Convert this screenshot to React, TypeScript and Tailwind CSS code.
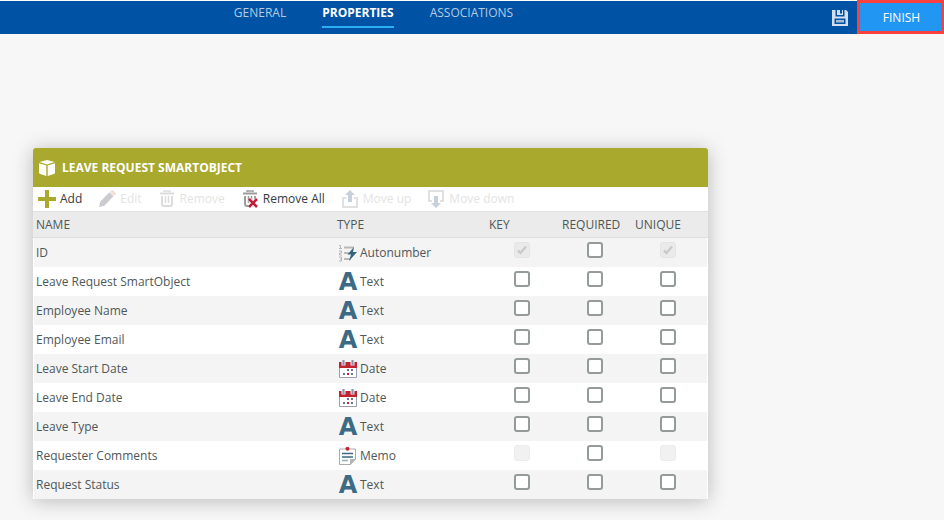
import { useState } from 'react';

type Kind = 'Autonumber' | 'Text' | 'Date' | 'Memo';
type Flag = 'on' | 'off' | 'locked-on' | 'locked-off';

interface Property {
  name: string;
  kind: Kind;
  key?: Flag;
  unique?: Flag;
}

const properties: Property[] = [
  { name: 'ID', kind: 'Autonumber', key: 'locked-on', unique: 'locked-on' },
  { name: 'Leave Request SmartObject', kind: 'Text' },
  { name: 'Employee Name', kind: 'Text' },
  { name: 'Employee Email', kind: 'Text' },
  { name: 'Leave Start Date', kind: 'Date' },
  { name: 'Leave End Date', kind: 'Date' },
  { name: 'Leave Type', kind: 'Text' },
  { name: 'Requester Comments', kind: 'Memo', key: 'locked-off', unique: 'locked-off' },
  { name: 'Request Status', kind: 'Text' },
];

function SaveIcon() {
  return (
    <svg className="size-4" viewBox="0 0 16 16" fill="none" aria-hidden="true">
      <path d="M0 0h14l2 2v14H0z" fill="#d3dff0" />
      <path d="M3.500 0h1.500v5h6V0h1.500v6.500h-9z" fill="#0052a4" />
      <path d="M8 0h2v3.500H8z" fill="#0052a4" />
      <path d="M2.500 8.500h11v5.500h-11z" fill="#0052a4" />
      <path d="M4 10h8v2.500H4z" fill="#a3bddd" />
    </svg>
  );
}

function BoxIcon() {
  return (
    <svg className="size-4" viewBox="0 0 16 16" fill="#fff" aria-hidden="true">
      <path d="M8 0l7.500 2L8 4.500.5 2z" />
      <path d="M0 3.200l7.300 2.400V16L1.200 14Q0 13.500 0 12.500z" />
      <path d="M16 3.200L8.700 5.600V16l6.100-2q1.200-.5 1.200-1.500z" />
    </svg>
  );
}

function AddIcon() {
  return (
    <svg className="size-[18px]" viewBox="0 0 18 18" fill="#a9a92e" aria-hidden="true">
      <path d="M7 0h4v7h7v4h-7v7H7v-7H0V7h7z" />
    </svg>
  );
}

function EditIcon() {
  return (
    <svg className="size-[18px]" viewBox="0 0 18 18" aria-hidden="true">
      <path d="M1 17l1.300-5.500L11.500 2.300l4 4L6.300 15.700z" fill="#c9cbce" />
      <path d="M12 1.800L13.500.4q.8-.6 1.600 0l2.500 2.500q.6.800 0 1.600L16 6z" fill="#f3dfd2" />
    </svg>
  );
}

function Bin({ color }: { color: string }) {
  return (
    <g fill="none" stroke={color}>
      <path d="M2 3.500h14" strokeWidth="2" />
      <path d="M6 2V1h6v1" strokeWidth="1.500" />
      <path d="M4 6v7.500q0 2.500 2 2.500h6q2 0 2-2.500V6" strokeWidth="2" />
      <path d="M7.500 6v7M10.500 6v7" strokeWidth="1.500" />
    </g>
  );
}

function RemoveIcon() {
  return (
    <svg className="size-[18px]" viewBox="0 0 18 18" aria-hidden="true">
      <Bin color="#dcdcdc" />
    </svg>
  );
}

function RemoveAllIcon() {
  return (
    <svg className="size-[18px]" viewBox="0 0 18 18" aria-hidden="true">
      <Bin color="#9c9c9c" />
      <path d="M8.500 9.500l7 7.500M15.500 9.500l-7 7.500" stroke="#fff" strokeWidth="4" />
      <path d="M8 9l8 8M16 9l-8 8" stroke="#c0213a" strokeWidth="2.500" />
    </svg>
  );
}

function MoveUpIcon() {
  return (
    <svg className="size-[18px]" viewBox="0 0 18 18" aria-hidden="true">
      <path d="M5 8H2v9h14V8h-3" fill="none" stroke="#e0e0e0" strokeWidth="2" />
      <path d="M9 0l5 5h-3v7H7V5H4z" fill="#c6d1da" />
    </svg>
  );
}

function MoveDownIcon() {
  return (
    <svg className="size-[18px]" viewBox="0 0 18 18" aria-hidden="true">
      <path d="M5 11H2V1h14v10h-3" fill="none" stroke="#e0e0e0" strokeWidth="2" />
      <path d="M9 18l5-5h-3V6H7v7H4z" fill="#c6d1da" />
    </svg>
  );
}

function KindIcon({ kind }: { kind: Kind }) {
  if (kind === 'Text') {
    return (
      <span
        aria-hidden="true"
        className="flex size-[18px] shrink-0 items-center justify-center font-['DejaVu_Sans',sans-serif] text-[24px] leading-[18px] font-bold text-[#3d6a85]"
      >
        A
      </span>
    );
  }
  return (
    <svg className="size-[18px] shrink-0" viewBox="0 0 18 18" fill="none" aria-hidden="true">
      {kind === 'Autonumber' && (
        <>
          <path d="M0 1.500h1.500V4M0 4.500h3M0 7h2.500v2H0.500v2H3M0 13h2.500v4H0M1 15h1.500" stroke="#b5b5b5" />
          <path d="M5 3.500h10M5 9h5M5 15h7" stroke="#b9b9b9" strokeWidth="2" />
          <path d="M15 3L8.500 10.500H12L10 17l8-9h-4z" fill="#35637f" />
        </>
      )}
      {kind === 'Date' && (
        <>
          <path d="M.5 3v14.500h17V3" fill="#fff" stroke="#9a9db0" />
          <path d="M0 2h18v6H0z" fill="#c0232f" />
          <path d="M4.500 0v5.500M13.500 0v5.500" stroke="#f0eaf0" strokeWidth="4" />
          <path d="M4.500 0v5M13.500 0v5" stroke="#8b90ab" strokeWidth="2" />
          <path d="M8 9h2v2H8zM12 9h2v2h-2zM4 13h2v2H4zM12 13h2v2h-2z" fill="#6b7090" />
          <path d="M8 13h2v2H8z" fill="#c0232f" />
        </>
      )}
      {kind === 'Memo' && (
        <>
          <path d="M.5 2h16v10L11.500 17.500H.5z" fill="#fff" stroke="#aaa" />
          <path d="M11 18v-6h6z" fill="#b5b5b5" />
          <path d="M3 6.500h11M3 10h11" stroke="#3d6a85" strokeWidth="1.500" />
          <path d="M3 13.500h6" stroke="#8fb0b8" strokeWidth="1.500" />
          <circle cx="8.500" cy="1.800" r="1.900" fill="#c0232f" />
        </>
      )}
    </svg>
  );
}

function FlagBox({ label, initial = 'off' }: { label: string; initial?: Flag }) {
  const [checked, setChecked] = useState(initial === 'on' || initial === 'locked-on');
  const locked = initial.startsWith('locked');
  return (
    <label className="relative mt-1 block size-4">
      <input
        type="checkbox"
        aria-label={label}
        checked={checked}
        disabled={locked}
        onChange={(e) => setChecked(e.target.checked)}
        className="block size-4 appearance-none rounded-[3px] border-2 border-[#959a9b] bg-white disabled:border disabled:border-[#ececec] disabled:bg-[#f1f1f1] disabled:checked:border-[#e4e4e4] disabled:checked:bg-[#eaeaea]"
      />
      {checked && (
        <svg className="pointer-events-none absolute inset-0 size-4" viewBox="0 0 16 16" fill="none" aria-hidden="true">
          <path d="M4 8.500l2.500 2.500L12 4.500" stroke={locked ? '#cbcbcb' : '#555'} strokeWidth="2.500" />
        </svg>
      )}
    </label>
  );
}

const tools = [
  { label: 'Add', Icon: AddIcon, enabled: true },
  { label: 'Edit', Icon: EditIcon, enabled: false },
  { label: 'Remove', Icon: RemoveIcon, enabled: false },
  { label: 'Remove All', Icon: RemoveAllIcon, enabled: true },
  { label: 'Move up', Icon: MoveUpIcon, enabled: false },
  { label: 'Move down', Icon: MoveDownIcon, enabled: false },
];

export default function App() {
  return (
    <div className="min-h-screen bg-[#f7f7f7] font-['Open_Sans','Noto_Sans',sans-serif] text-[12px] text-[#4f5759]">
      <header className="flex h-[34px] border-t border-white bg-[#0052a4]">
        <nav className="flex flex-1 justify-center gap-9 pr-[76px] leading-4 text-[#b5cbe4]">
          <a href="#general" className="mt-1 h-[23px]">GENERAL</a>
          <a href="#properties" aria-current="page" className="mt-1 h-[23px] border-b-2 border-[#29b0f2] font-bold text-white">
            PROPERTIES
          </a>
          <a href="#associations" className="mt-1 h-[23px]">ASSOCIATIONS</a>
        </nav>
        <button type="button" aria-label="Save" className="px-[9px]">
          <SaveIcon />
        </button>
        <button type="button" className="-mt-px w-[87px] border-[3px] border-[#fb4040] bg-[#2196f3] pt-px pl-[2px] text-white">
          FINISH
        </button>
      </header>

      <main className="px-[33px] pt-[114px] pb-5">
        <section className="w-full max-w-[675px] overflow-hidden rounded-t-[3px] bg-white shadow-[0_2px_20px_rgba(0,0,0,0.25)]">
          <h1 className="flex h-[39px] items-center gap-[7px] bg-[#a9a92e] px-[6px] font-bold text-white">
            <BoxIcon />
            LEAVE REQUEST SMARTOBJECT
          </h1>
          <div role="toolbar" aria-label="Properties" className="flex h-6 items-center gap-4 px-[5px]">
            {tools.map(({ label, Icon, enabled }) => (
              <button
                key={label}
                type="button"
                disabled={!enabled}
                className="flex items-center gap-1 text-[#333b3d] disabled:text-[#e4e4e4]"
              >
                <Icon />
                {label}
              </button>
            ))}
          </div>
          <table className="w-full table-fixed border-separate border-spacing-0 text-left">
            <thead>
              <tr className="h-[27px] bg-[#ebebeb] [&>th]:border-y [&>th]:border-[#dfdfdf] [&>th]:p-0 [&>th]:pl-[3px] [&>th]:font-normal">
                <th scope="col">NAME</th>
                <th scope="col" className="w-[152px]">TYPE</th>
                <th scope="col" className="w-[73px]">KEY</th>
                <th scope="col" className="w-[73px]">REQUIRED</th>
                <th scope="col" className="w-[76px]">UNIQUE</th>
              </tr>
            </thead>
            <tbody>
              {properties.map((p) => (
                <tr
                  key={p.name}
                  className="h-[29px] odd:bg-[#f4f4f4] [&>td]:p-0 [&>td:first-child]:border-l [&>td:first-child]:border-white [&>td:last-child]:border-r [&>td:last-child]:border-white"
                >
                  <td>
                    <div className="pl-[2px]">{p.name}</div>
                  </td>
                  <td>
                    <div className="flex items-center gap-[3px] pl-[5px]">
                      <KindIcon kind={p.kind} />
                      {p.kind}
                    </div>
                  </td>
                  <td className="align-top">
                    <div className="flex pl-7">
                      <FlagBox label={`${p.name} key`} initial={p.key} />
                    </div>
                  </td>
                  <td className="align-top">
                    <div className="flex pl-7">
                      <FlagBox label={`${p.name} required`} />
                    </div>
                  </td>
                  <td className="align-top">
                    <div className="flex pl-7">
                      <FlagBox label={`${p.name} unique`} initial={p.unique} />
                    </div>
                  </td>
                </tr>
              ))}
            </tbody>
          </table>
        </section>
      </main>
    </div>
  );
}
